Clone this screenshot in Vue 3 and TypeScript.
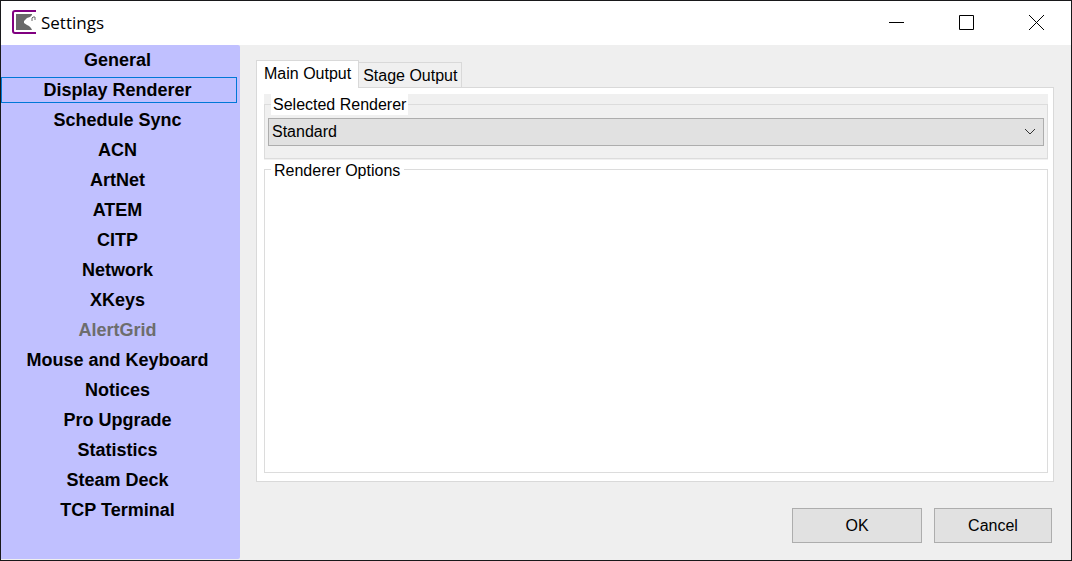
<script setup lang="ts">
import { ref } from 'vue'

interface Section {
  name: string
  disabled?: boolean
}

const sections: Section[] = [
  { name: 'General' },
  { name: 'Display Renderer' },
  { name: 'Schedule Sync' },
  { name: 'ACN' },
  { name: 'ArtNet' },
  { name: 'ATEM' },
  { name: 'CITP' },
  { name: 'Network' },
  { name: 'XKeys' },
  { name: 'AlertGrid', disabled: true },
  { name: 'Mouse and Keyboard' },
  { name: 'Notices' },
  { name: 'Pro Upgrade' },
  { name: 'Statistics' },
  { name: 'Steam Deck' },
  { name: 'TCP Terminal' },
]
const tabs: string[] = ['Main Output', 'Stage Output']

const activeSection = ref('Display Renderer')
const activeTab = ref('Main Output')
const renderer = ref('Standard')
</script>

<template>
  <div class="window">
    <header class="titlebar">
      <svg class="logo" width="26" height="26" viewBox="0 0 26 26" aria-hidden="true">
        <path d="M25 2H4Q2 2 2 4V22Q2 24 4 24H25" fill="none" stroke="#800080" stroke-width="2" />
        <path d="M5 5H21V6L19 8L16 9L13 12V14L16 16L18 17L20 19L21 21H5Z" fill="#696969" />
        <path d="M21 12V9L22 8H24V11" fill="none" stroke="#696969" stroke-width="1" />
      </svg>
      <h1 class="title">Settings</h1>
      <div class="controls">
        <button type="button" class="control" aria-label="Minimize">
          <svg width="15" height="15" viewBox="0 0 15 15"><path d="M0 7.5H15" /></svg>
        </button>
        <button type="button" class="control" aria-label="Maximize">
          <svg width="15" height="15" viewBox="0 0 15 15"><path d="M.5 .5H14.5V14.5H.5Z" /></svg>
        </button>
        <button type="button" class="control" aria-label="Close">
          <svg width="15" height="15" viewBox="0 0 15 15"><path d="M0 0L15 15M15 0L0 15" /></svg>
        </button>
      </div>
    </header>

    <div class="body">
      <nav class="sidebar" aria-label="Settings sections">
        <button
          v-for="section in sections"
          :key="section.name"
          type="button"
          class="section"
          :class="{ selected: section.name === activeSection }"
          :disabled="section.disabled"
          @click="activeSection = section.name"
        >
          {{ section.name }}
        </button>
      </nav>

      <main class="content">
        <div class="tabs" role="tablist">
          <button
            v-for="tab in tabs"
            :key="tab"
            type="button"
            role="tab"
            class="tab"
            :class="{ active: tab === activeTab }"
            :aria-selected="tab === activeTab"
            @click="activeTab = tab"
          >
            {{ tab }}
          </button>
        </div>

        <section class="panel" role="tabpanel">
          <div class="shade">
            <fieldset class="group">
              <legend class="legend"><label for="renderer">Selected Renderer</label></legend>
              <div class="dropdown">
                <select id="renderer" v-model="renderer" class="select">
                  <option>Standard</option>
                </select>
                <svg class="chevron" width="12" height="8" viewBox="0 0 12 8" aria-hidden="true">
                  <path d="M1 1L6 6L11 1" />
                </svg>
              </div>
            </fieldset>
          </div>
          <fieldset class="group options">
            <legend class="legend">Renderer Options</legend>
          </fieldset>
        </section>

        <footer class="actions">
          <button type="button" class="action ok">OK</button>
          <button type="button" class="action cancel">Cancel</button>
        </footer>
      </main>
    </div>
  </div>
</template>

<style>
body {
  margin: 0;
}
</style>

<style scoped>
.window {
  box-sizing: border-box;
  display: flex;
  flex-direction: column;
  min-height: 100vh;
  border: 1px solid #18181a;
  background: #efefef;
  color: #000;
  font: 16px/20px "Liberation Sans", Arial, sans-serif;
}
button,
select {
  margin: 0;
  border-radius: 0;
  color: inherit;
  font: inherit;
}
.titlebar {
  display: flex;
  align-items: center;
  height: 44px;
  padding-left: 10px;
  background: #fff;
}
.logo {
  flex: none;
  margin-bottom: 2px;
}
.title {
  margin: 0 0 0 4px;
  font: 400 17px/24px "Open Sans", "Noto Sans", sans-serif;
}
.controls {
  display: flex;
  height: 100%;
  margin-left: auto;
}
.control {
  display: flex;
  align-items: center;
  justify-content: center;
  width: 70px;
  padding: 0 0 2px;
  border: 0;
  background: transparent;
}
.control path {
  fill: none;
  stroke: #000;
}
.body {
  display: flex;
  flex: 1;
}
.sidebar {
  display: flex;
  flex-direction: column;
  flex: none;
  gap: 4px;
  box-sizing: border-box;
  width: 239px;
  margin-bottom: 1px;
  padding: 2px 3px 2px 0;
  border-radius: 0 2px 2px 0;
  background: #c0c0ff;
}
.section {
  height: 26px;
  padding: 0 3px 0 0;
  border: 1px solid transparent;
  background: transparent;
  font-size: 18px;
  font-weight: 700;
  line-height: 24px;
}
.section.selected {
  border-color: #0078d7;
}
.section:disabled {
  color: #6d6d6d;
}
.content {
  display: flex;
  flex: 1;
  flex-direction: column;
  min-width: 0;
  padding: 15px 17px 17px 16px;
}
.tabs {
  display: flex;
  align-items: flex-end;
}
.tab {
  height: 25px;
  padding: 2px 4px 0;
  border: 1px solid #d9d9d9;
  border-width: 1px 1px 0 0;
  background: #f0f0f0;
}
.tab.active {
  z-index: 1;
  height: 28px;
  margin-bottom: -1px;
  padding: 0 7px 2px;
  border-left-width: 1px;
  background: #fff;
}
.panel {
  display: flex;
  flex: 1;
  flex-direction: column;
  padding: 6px 5px 8px 7px;
  border: 1px solid #d9d9d9;
  background: #fff;
}
.shade {
  padding-bottom: 1px;
  background: #f0f0f0;
}
.group {
  min-width: 0;
  margin: 0;
  padding: 3px 3px 12px;
  border: 1px solid #dcdcdc;
}
.legend {
  margin-left: 3px;
  padding: 1px 2px 0;
  background: #fff;
}
.options {
  flex: 1;
}
.options .legend {
  padding: 2px 4px 0 3px;
  line-height: 17px;
}
.dropdown {
  position: relative;
}
.select {
  display: block;
  width: 100%;
  height: 28px;
  padding: 0 28px 0 3px;
  border: 1px solid #adadad;
  appearance: none;
  background: #e1e1e1;
}
.chevron {
  position: absolute;
  top: 10px;
  right: 8px;
  pointer-events: none;
}
.chevron path {
  fill: none;
  stroke: #333;
}
.actions {
  display: flex;
  justify-content: flex-end;
  gap: 12px;
  padding: 26px 2px 0 0;
}
.action {
  height: 35px;
  padding: 0;
  border: 1px solid #adadad;
  background: #e1e1e1;
}
.ok {
  width: 130px;
}
.cancel {
  width: 118px;
}
</style>
